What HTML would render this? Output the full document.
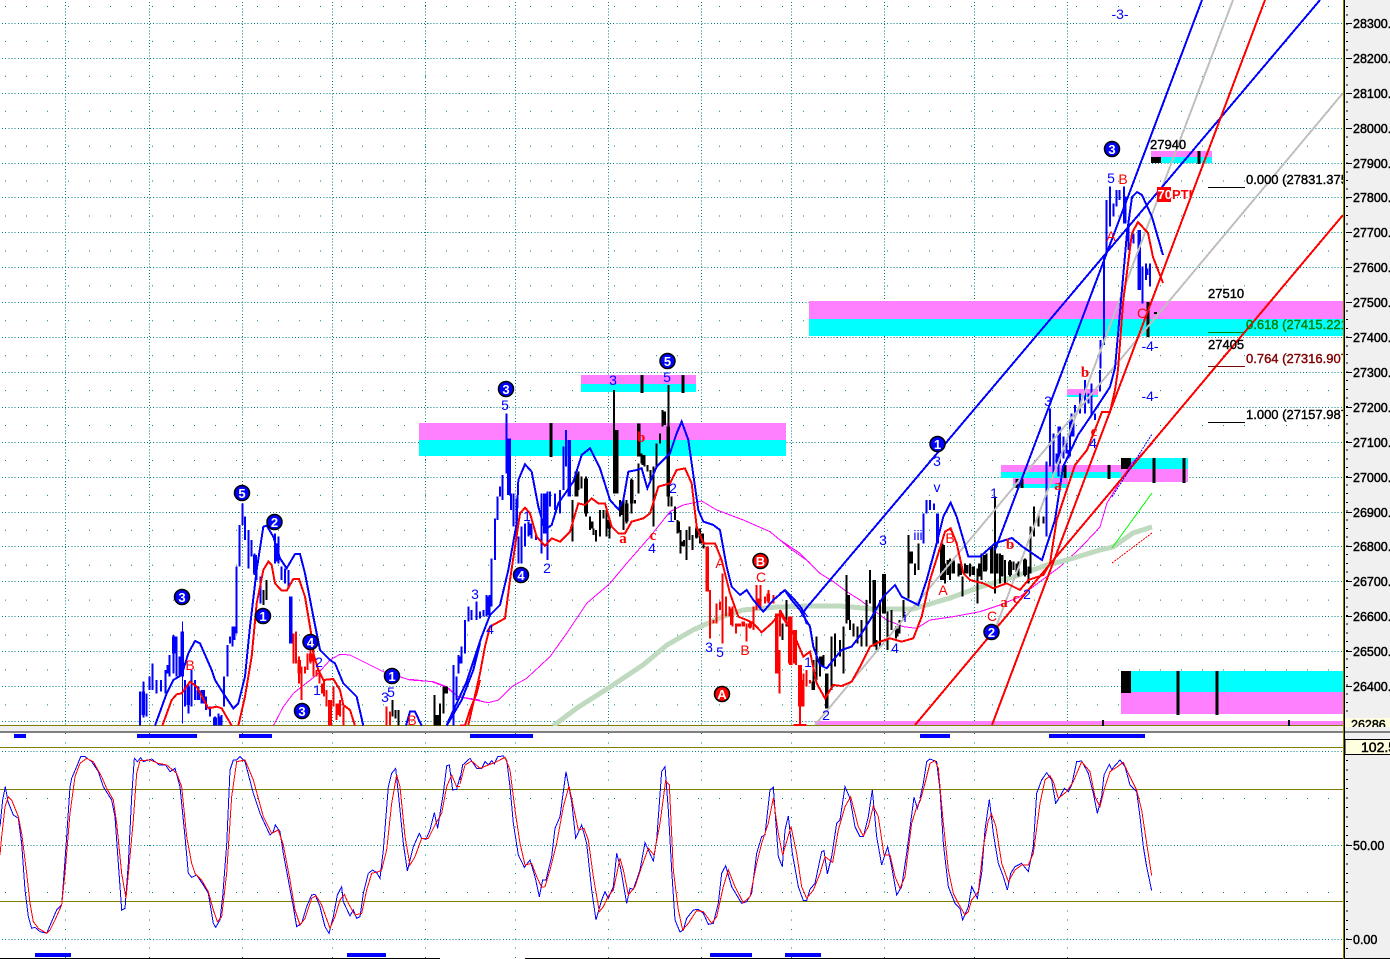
<!DOCTYPE html>
<html><head><meta charset="utf-8"><title>Chart</title>
<style>
html,body{margin:0;padding:0;background:#fff;width:1390px;height:959px;overflow:hidden}
svg{display:block;font-family:"Liberation Sans",Arial,sans-serif;shape-rendering:crispEdges}
.w{font-size:14px;text-anchor:middle;fill:#00f}
.r{font-size:14px;text-anchor:middle;fill:#f00}
.s{font-family:"Liberation Serif",serif;font-size:15px;font-weight:bold}
.k{font-size:13px;fill:#000;stroke:#000;stroke-width:.4}
.ax{font-size:12.5px;fill:#000;stroke:#000;stroke-width:.45}
.bt{font-size:13px;font-weight:bold;fill:#fff;text-anchor:middle}
.l{fill:none}
</style></head><body>
<svg width="1390" height="959" viewBox="0 0 1390 959" xmlns="http://www.w3.org/2000/svg">
<defs>
<pattern id="mi" x="0" y="0" width="21" height="34.92" patternUnits="userSpaceOnUse"><rect x="5" y="6" width="1" height="1" fill="#008080"/></pattern>
</defs>
<rect width="1390" height="959" fill="#fff"/>
<rect x="1345" y="0" width="45" height="959" fill="#f0f0f0"/>

<svg x="0" y="0" width="1344" height="726">
<rect width="1344" height="726" fill="url(#mi)"/>
<!-- major grid -->
<g stroke="#008080" stroke-width="1" stroke-dasharray="1 2.15" fill="none">
<path d="M2 23.5H1344M2 58.5H1344M2 93.5H1344M2 128.5H1344M2 163.5H1344M2 197.5H1344M2 232.5H1344M2 267.5H1344M2 302.5H1344M2 337.5H1344M2 372.5H1344M2 407.5H1344M2 442.5H1344M2 477.5H1344M2 512.5H1344M2 546.5H1344M2 581.5H1344M2 616.5H1344M2 651.5H1344M2 686.5H1344M2 721.5H1344"/>
<path d="M65.5 2V726M149.5 2V726M242.5 2V726M332.5 2V726M425.5 2V726M515.5 2V726M608.5 2V726M701.5 2V726M791.5 2V726M884.5 2V726M974.5 2V726M1067.5 2V726"/>
</g>
<!-- bands -->
<rect x="419" y="423" width="367" height="17" fill="#ff80ff"/><rect x="419" y="440" width="367" height="16" fill="#0ff"/>
<rect x="581" y="375" width="115" height="9" fill="#ff80ff"/><rect x="581" y="384" width="115" height="8" fill="#0ff"/>
<rect x="809" y="301" width="535" height="18" fill="#ff80ff"/><rect x="809" y="319" width="535" height="17" fill="#0ff"/>
<rect x="1151" y="151" width="61" height="6" fill="#ff80ff"/><rect x="1151" y="157" width="61" height="6" fill="#0ff"/><rect x="1151" y="157" width="10" height="6" fill="#000"/>
<rect x="1001" y="465" width="120" height="7" fill="#ff80ff"/><rect x="1001" y="472" width="120" height="6" fill="#0ff"/>
<rect x="1013" y="478" width="55" height="6" fill="#ff80ff"/><rect x="1013" y="484" width="55" height="4" fill="#0ff"/>
<rect x="1067" y="389" width="31" height="6" fill="#ff80ff"/><rect x="1067" y="395" width="31" height="2" fill="#0ff"/>
<rect x="1121" y="469" width="67" height="13" fill="#ff80ff"/><rect x="1131" y="458" width="57" height="11" fill="#0ff"/><rect x="1121" y="458" width="10" height="11" fill="#000"/>
<rect x="1121" y="692" width="223" height="22" fill="#ff80ff"/><rect x="1121" y="671" width="223" height="21" fill="#0ff"/><rect x="1121" y="671" width="10" height="22" fill="#000"/>
<rect x="815" y="721" width="529" height="4" fill="#ff80ff"/>
<path d="M0 725.5H1344" stroke="#808000" stroke-width="1"/>
<!-- black ticks -->
<path stroke="#000" stroke-width="3" fill="none" d="M551 423V457M642 375V393M683 375V393M1154 458V483M1184 458V483M1109 465V479M1065 465V478M1017 479V488M1022 479V488M1178 671V715M1217 671V715M1199 151V164M1148 302V337"/>
<path stroke="#000" stroke-width="2" d="M1103 720V726M1289 720V726M1154 313H1157"/>

<!-- magenta MA -->
<g fill="none" stroke="#f0f" stroke-width="3">
<polyline transform="translate(0,480) scale(.33333)" points="820,737 850,680 880,640 950,585 990,540 1020,523 1050,525 1150,575 1230,600 1300,605 1340,620 1375,650 1440,660"/>
<polyline transform="translate(410,340) scale(.33333)" points="0,1018 65,1025 105,1040 145,1070 235,1088 265,1080 305,1040 350,1015 420,950 470,880 530,790 600,730 650,670 720,590 780,515 820,495 875,483 920,510 1000,540 1080,575 1140,625 1200,668"/>
<polyline transform="translate(780,420) scale(.33333)" points="0,360 60,400 120,460 160,485 200,515 240,540 280,570 320,600 370,620 410,625 450,600 520,590 600,575 660,555 720,530 800,470 840,440 900,385 960,321 981,249 1029,171 1056,129 1119,69"/>
</g>
<!-- green MA -->
<g fill="none" stroke="#bfdabf" stroke-width="5"><polyline points="553,726 577,708 610,687 643,665 667,645 693,630 722,617 743,610 777,607 810,606 840,606 873,609 913,609 950,598 980,587 1013,577 1047,565 1067,560 1100,550 1113,547 1133,533 1152,527"/></g>

<!-- candles: blue -->
<g fill="none" stroke="#00f" stroke-width="1.6">
<path transform="translate(0,480) scale(.33333)" stroke-width="6" d="M420 635V737M430 605V712M440 640V710M448 590V630M457 550V630M470 600V640M483 600V635M497 570V640M508 525V590M520 465V580M530 470V590M538 530V590M555 600V680M565 610V700M575 570V680M585 600V660M595 620V660M605 630V670M618 650V690M630 680V710M645 710V737M655 700V737M665 705V737M672 590V680M682 495V590M690 470V490M697 440V500M703 440V480M710 260V460M718 135V260M727 70V135M735 110V180M745 150V265M755 180V230M763 220V285M770 250V300M782 290V370M825 160V250M835 170V250M845 260V300M855 265V310M865 270V325M1360 555V737M1370 590V660M1385 500V550M1395 420V520M1405 380V415M1415 395V420M1430 395V410"/>
<path transform="translate(0,480) scale(.33333)" stroke-width="11" d="M430 635V705M547 455V590M872 350V490M522 470V520M505 555V580M565 620V675M595 630V660M610 630V670M645 712V737M662 710V737M765 225V280M830 190V245"/>
<path transform="translate(0,480) scale(.33333)" stroke-width="3" d="M547 425V730"/>
<path transform="translate(410,340) scale(.33333)" stroke-width="6" d="M130 975V1155M145 945V1000M155 945V970M165 840V940M175 800V845M185 810V830M200 785V840M210 815V835M220 810V830M230 765V830M238 765V830M245 655V800M255 535V660M262 470V540M270 440V470M278 405V480M290 220V400M303 460V510M310 460V560M320 475V590M325 590V670M335 560V670M345 550V620M355 545V590M365 560V595M378 580V600M395 460V640M412 455V660M420 455V500M435 460V510M450 450V520M460 320V450M468 270V380"/>
<path transform="translate(410,340) scale(.33333)" stroke-width="11" d="M297 295V465M405 460V580M478 300V470M235 770V825M150 950V970M360 550V585"/>
<path transform="translate(780,420) scale(.33333)" stroke-width="6" d="M430 280V370M440 240V280M450 240V270M462 250V270M800 125V350M810 100V130M820 40V120M830 100V130M840 20V130M850 60V100M860 60V100M870 0V110M880 0V50"/>
<path transform="translate(780,420) scale(.33333)" stroke-width="9" d="M473 280V370"/>
<path transform="translate(1000,370) scale(.33333)" stroke-width="6" d="M140 275V490M150 115V290M160 255V310M175 170V320M190 200V265M205 240V265M215 130V200M225 105V140M240 70V130M255 30V130M265 70V100M275 40V135M285 130V150M300 0V65"/>
<path transform="translate(1000,0) scale(.33333)" stroke-width="6" d="M302 1020V1105M312 770V1035M320 600V760M330 560V680M340 610V650M350 570V620M358 570V600M372 560V670M385 660V750M400 700V730M428 800V910M438 790V840M450 790V860"/>
<path transform="translate(1000,0) scale(.33333)" stroke-width="11" d="M418 690V870M374 590V670M440 805V825"/>
</g>
<!-- candles: red -->
<g fill="none" stroke="#f00" stroke-width="1.6">
<path transform="translate(0,480) scale(.33333)" stroke-width="6" d="M880 460V550M888 455V550M897 530V610M905 560V660M915 560V580M922 520V570M932 510V550M940 510V590M950 570V590M958 570V610M966 610V640M972 600V650M980 630V680M1000 620V680M1010 670V720M1020 660V710M1030 680V737M1160 680V737M1170 695V737"/>
<path transform="translate(0,480) scale(.33333)" stroke-width="11" d="M990 660V737M932 520V545M898 540V580M1015 670V705"/>
<path transform="translate(410,340) scale(.33333)" stroke-width="6" d="M900 750V895M910 840V850M920 790V850M930 785V810M938 700V910M948 770V830M958 800V830M968 800V860M978 850V880M990 850V860M1010 850V905M1020 845V865M1030 800V870M1040 735V810M1052 735V810M1065 770V790M1075 750V790M1090 765V790M1108 930V1060M1158 940V975M1180 1000V1055M1190 990V1040M1170 1100V1150"/>
<path transform="translate(410,340) scale(.33333)" stroke-width="11" d="M892 620V755M1100 820V1000M1142 830V975M1170 975V1100M1150 1157H1190M965 805V855M985 850V860M1000 845V860M1020 850V862M1045 775V800M1075 760V785"/>
<path transform="translate(780,420) scale(.33333)" stroke-width="6" d="M0 570V650M60 780V915M70 790V860M90 780V790"/>
<path transform="translate(780,420) scale(.33333)" stroke-width="11" d="M30 590V730M45 630V730M65 780V860"/>
</g>
<!-- candles: black -->
<g fill="none" stroke="#000" stroke-width="1.6">
<path transform="translate(0,480) scale(.33333)" stroke-width="6" d="M790 330V375M800 300V360M1178 660V710M1186 690V715M1196 690V737M1303 645V737M1320 670V737M1330 620V700"/>
<path transform="translate(0,480) scale(.33333)" stroke-width="11" d="M1312 705V737M1338 620V640"/>
<path transform="translate(410,340) scale(.33333)" stroke-width="6" d="M488 480V605M497 395V470M505 395V450M515 410V445M528 410V530M540 530V570M550 565V585M558 570V605M570 510V590M580 510V535M590 510V590M598 540V595M612 150V460M630 480V530M640 480V570M650 480V550M665 415V520M675 480V490M686 370V460M695 340V370M703 345V380M712 375V395M722 390V420M730 380V560M740 310V380M750 280V310M758 210V260M765 215V255M775 135V500M785 470V500M795 500V540M803 540V580M812 570V640M822 600V620M830 570V660M838 560V600M848 585V630M860 560V595M870 565V610M880 605V625M1118 850V900M1130 780V860"/>
<path transform="translate(410,340) scale(.33333)" stroke-width="11" d="M620 270V460M650 490V545M686 250V350M775 260V470M763 215V255M500 400V470M528 415V520M545 545V565M598 540V565M635 485V525M665 420V490M700 345V375M805 545V578M820 605V618M860 565V592M876 580V610"/>
<path transform="translate(780,420) scale(.33333)" stroke-width="6" d="M100 720V810M110 650V780M120 710V770M130 705V740M155 650V810M165 640V740M180 660V710M190 620V760M200 465V610M210 600V630M220 610V650M232 620V670M245 600V680M260 540V680M270 450V550M290 660V690M300 540V680M322 575V690M335 570V630M348 620V655M358 600V640M370 540V600M385 345V535M393 395V430M405 430V465M415 370V450M495 430V490M510 415V480M520 420V460M535 430V470M548 470V530M555 430V460M570 430V470M580 440V460M592 445V550M605 400V480M620 400V450M645 230V520M660 400V490M675 420V490M690 420V470M700 425V450M715 425V470M735 415V470M745 440V490M752 320V460M762 260V350M775 280V320M790 290V310"/>
<path transform="translate(780,420) scale(.33333)" stroke-width="11" d="M140 760V865M283 480V680M312 462V580M205 525V600M485 370V480M393 395V430M635 380V460M350 625V650M100 785V810M125 710V740M490 375V480M505 420V465M520 425V460M540 430V465M560 435V460M580 440V465M600 430V470M615 405V455M650 400V460M665 405V470M690 425V465M712 430V465M735 418V465"/>
</g>

<!-- trend lines -->
<g fill="none" stroke-width="2">
<path stroke="#bfbfbf" d="M993 635L1233 0M815 725L1343 93"/>
<path stroke="#00f" d="M803 612L1320 0M995 550L1202 0"/>
<path stroke="#f00" d="M992 725L1265 0M915 725L1343 215"/>
</g>
<!-- MA blue -->
<g fill="none" stroke="#00f" stroke-width="6">
<polyline transform="translate(0,480) scale(.33333)" points="465,737 500,640 520,600 545,585 565,520 585,483 600,490 635,570 645,600 670,640 680,655 700,685 715,670 735,590 750,440 770,270 790,140 800,137 820,170 840,235 860,265 885,222 900,222 915,280 940,410 960,510 990,540 1005,550 1030,610 1070,650 1090,737"/>
<polyline transform="translate(0,480) scale(.33333)" points="1218,737 1230,695 1245,695 1265,737"/>
<polyline transform="translate(0,480) scale(.33333)" points="1340,737 1385,660 1420,570 1440,490"/>
<polyline transform="translate(410,340) scale(.33333)" points="110,1155 170,1025 215,890 240,825 270,795 295,690 320,550 325,420 345,373 365,395 385,500 405,570 425,555 445,490 490,425 515,345 540,325 570,385 600,480 625,508 640,480 655,395 680,390 695,385 712,445 740,380 780,340 800,280 815,245 835,300 865,510 880,545 910,555 930,570 950,680 965,740 990,765 1010,750 1030,780 1060,815 1090,780 1125,750 1150,775 1175,805 1190,850 1200,855"/>
<polyline transform="translate(780,420) scale(.33333)" points="0,520 15,512 35,540 60,570 90,620 100,680 120,735 140,745 160,720 185,690 215,680 245,640 270,600 310,530 345,495 365,530 385,540 415,555 440,480 470,370 490,290 512,248 530,290 565,410 600,410 645,370 696,354 729,381 786,420 825,300 849,141 894,45 939,-21 990,-99 1005,-156 1041,-561 1056,-669 1071,-684 1086,-675 1116,-609 1149,-495"/>
</g>
<!-- MA red -->
<g fill="none" stroke="#f00" stroke-width="6">
<polyline transform="translate(0,480) scale(.33333)" points="487,737 515,660 530,643 545,640 570,605 590,620 625,685 650,680 665,685 695,737"/>
<polyline transform="translate(0,480) scale(.33333)" points="715,737 735,650 755,530 770,370 790,270 805,245 815,255 825,310 845,332 860,332 880,297 897,297 915,350 935,470 940,520 955,570 970,600 1000,597 1020,630 1030,675 1050,690 1065,737"/>
<polyline transform="translate(0,480) scale(.33333)" points="1380,737 1395,737 1410,690 1430,640 1440,600"/>
<polyline transform="translate(410,340) scale(.33333)" points="175,1155 210,1000 225,920 240,860 285,835 300,720 315,620 330,520 345,503 360,520 380,590 405,618 425,595 450,605 480,575 505,490 525,495 545,475 565,490 585,490 605,560 625,580 645,580 665,545 700,535 720,520 745,440 780,430 800,390 825,385 845,430 860,560 880,610 915,610 935,660 960,760 985,830 1010,840 1030,850 1055,877 1085,850 1110,820 1150,880 1180,950 1200,935"/>
<polyline transform="translate(780,420) scale(.33333)" points="0,570 40,640 70,710 90,695 110,790 135,835 160,795 185,798 215,785 240,740 270,680 300,665 330,655 365,665 400,655 425,590 450,480 475,400 495,335 512,325 530,370 550,460 570,480 610,490 640,505 680,490 720,510 745,480 790,465 810,430 830,300 850,240 885,135 921,90 966,-24 990,-24 1005,-90 1014,-150 1029,-351 1056,-561 1074,-594 1104,-561 1119,-489 1149,-411"/>
</g>
<!-- small fan -->
<path d="M1112 497L1152 434" stroke="#00f" stroke-width="1" stroke-dasharray="2 1" fill="none"/>
<path d="M1112 548L1152 493" stroke="#0f0" stroke-width="1" fill="none"/>
<path d="M1112 563L1152 533" stroke="#f00" stroke-width="1" stroke-dasharray="2 1" fill="none"/>

<!-- fib labels -->
<g fill="none" stroke-width="1"><path stroke="#000" d="M1208 187.5H1245M1208 422.5H1245"/><path stroke="#080" d="M1208 332.5H1245"/><path stroke="#800000" d="M1208 366.5H1245"/></g>
<text class="k" x="1150" y="149">27940</text>
<text class="k" x="1246" y="184">0.000 (27831.375)</text>
<text class="k" x="1208" y="298">27510</text>
<text class="k" x="1246" y="329" style="fill:#008000;stroke:#008000">0.618 (27415.221)</text>
<text class="k" x="1208" y="349">27405</text>
<text class="k" x="1246" y="363" style="fill:#800000;stroke:#800000">0.764 (27316.907)</text>
<text class="k" x="1246" y="419">1.000 (27157.987)</text>
<rect x="1157" y="187" width="14" height="15" fill="#f00"/>
<text x="1157.5" y="199" style="font-size:13px;font-weight:bold;fill:#fff">70</text>
<text x="1172" y="199" style="font-size:13px;fill:#f00;font-weight:bold">PTI</text>

<!-- wave labels -->
<text class="w" x="1120" y="19">-3-</text><text class="w" x="1150" y="351">-4-</text><text class="w" x="1150" y="401">-4-</text>
<text class="w" x="1111" y="183">5</text><text class="r" x="1123" y="184">B</text><text class="r" x="1111" y="241">A</text><text class="r" x="1142" y="318">C</text>
<text class="r" x="190" y="670">B</text><text class="w" x="319" y="667">2</text><text class="w" x="317" y="695">1</text><text class="w" x="385" y="702">3</text><text class="w" x="391" y="697">5</text><text class="r" x="412" y="725">B</text>
<text class="w" x="505" y="410">5</text><text class="w" x="475" y="599">3</text><text class="w" x="490" y="634">4</text><text class="w" x="547" y="573">2</text><text class="w" x="527" y="521">1</text>
<text class="r s" x="623" y="543">a</text><text class="w" x="613" y="385">3</text><text class="w" x="667" y="382">5</text><text class="r s" x="641" y="442">b</text><text class="w" x="673" y="493">2</text><text class="w" x="671" y="522">1</text><text class="r s" x="653" y="540">c</text><text class="w" x="652" y="553">4</text>
<text class="r" x="720" y="568">A</text><text class="r" x="761" y="582">C</text><text class="w" x="709" y="652">3</text><text class="w" x="720" y="657">5</text><text class="r" x="745" y="655">B</text>
<text class="w" x="808" y="667">1</text><text class="w" x="804" y="617">X</text><text class="w" x="826" y="720">2</text><text class="w" x="883" y="545">3</text><text class="w" x="895" y="653">4</text><text class="w" x="918" y="540">iii</text><text class="w" x="905" y="622">i</text><text class="w" x="937" y="492">v</text><text class="w" x="937" y="466">3</text><text class="w" x="994" y="498">1</text>
<text class="r" x="950" y="543">B</text><text class="r" x="943" y="595">A</text><text class="r s" x="1010" y="549">b</text><text class="r" x="992" y="621">C</text><text class="r s" x="1004" y="607">a</text><text class="r s" x="1016" y="603">c</text><text class="w" x="1027" y="599">2</text><text class="r s" x="1058" y="490">a</text>
<text class="w" x="1048" y="406">3</text><text class="r s" x="1085" y="377">b</text><text class="w" x="1093" y="448">4</text><text class="r s" x="1094" y="436">c</text>

<!-- badges -->
<g stroke="#000" stroke-width="1.5" fill="#00f" style="shape-rendering:geometricPrecision">
<circle cx="242" cy="493" r="7.5"/><circle cx="274.5" cy="522" r="7.5"/><circle cx="182" cy="597" r="7.5"/><circle cx="263" cy="616" r="7.5"/><circle cx="310.5" cy="642" r="7.5"/><circle cx="302" cy="711" r="7.5"/><circle cx="392" cy="676" r="7.5"/><circle cx="506" cy="389" r="7.5"/><circle cx="521" cy="575" r="7.5"/><circle cx="667.5" cy="361" r="7.5"/><circle cx="937.5" cy="444" r="7.5"/><circle cx="991.5" cy="632" r="7.5"/><circle cx="1112" cy="149" r="7.5"/>
<circle cx="760.5" cy="561" r="7.5" fill="#f00"/><circle cx="722" cy="694" r="7.5" fill="#f00"/>
</g>
<text class="bt" x="242" y="498">5</text><text class="bt" x="274.5" y="527">2</text><text class="bt" x="182" y="602">3</text><text class="bt" x="263" y="621">1</text><text class="bt" x="310.5" y="647">4</text><text class="bt" x="302" y="716">3</text><text class="bt" x="392" y="681">1</text><text class="bt" x="506" y="394">3</text><text class="bt" x="521" y="580">4</text><text class="bt" x="667.5" y="366">5</text><text class="bt" x="937.5" y="449">1</text><text class="bt" x="991.5" y="637">2</text><text class="bt" x="1112" y="154">3</text><text class="bt" x="760.5" y="566">B</text><text class="bt" x="722" y="699">A</text>
</svg>

<!-- separator -->
<rect x="0" y="726" width="1390" height="5" fill="#f0f0f0"/>
<rect x="0" y="731" width="1390" height="2" fill="#808080"/>

<!-- lower pane -->
<g stroke="#008080" fill="none" stroke-width="1">
<path stroke-dasharray="1 2.15" d="M2 751.5H1344M2 845.5H1344M2 939.5H1344"/>
<path stroke-dasharray="1 8.33" d="M65.5 733V958M149.5 733V958M242.5 733V958M332.5 733V958M425.5 733V958M515.5 733V958M608.5 733V958M701.5 733V958M791.5 733V958M884.5 733V958M974.5 733V958M1067.5 733V958"/>
<path stroke-dasharray="1 20" d="M5 798.5H1344M5 892.5H1344"/>
</g>
<path d="M0 747.5H1344M0 789.5H1344M0 901.5H1344" stroke="#808000" stroke-width="1"/>
<path d="M0 958.5H440M525 958.5H1390" stroke="#000" stroke-width="1"/>
<g fill="#00f">
<rect x="14" y="734" width="12" height="4"/><rect x="137" y="734" width="60" height="4"/><rect x="239" y="734" width="33" height="4"/><rect x="470" y="734" width="63" height="4"/><rect x="920" y="734" width="30" height="4"/><rect x="1049" y="734" width="96" height="4"/>
<rect x="35" y="953" width="36" height="4"/><rect x="347" y="953" width="39" height="4"/><rect x="710" y="953" width="42" height="4"/><rect x="785" y="953" width="36" height="4"/>
</g>

<!-- stochastic blue -->
<g fill="none" stroke="#00f" stroke-width="3">
<polyline transform="translate(0,730) scale(.33333)" points="0,290 8,210 16,170 24,215 40,255 55,265 65,340 75,480 85,560 95,595 105,592 120,605 140,610 155,575 170,540 185,525 190,460 200,320 210,170 215,145 230,110 242,80 255,80 275,95 295,125 310,170 335,210 345,260 355,400 365,540 375,535 385,400 395,200 403,85 412,95 422,83 430,95 455,87 478,105 497,105 510,125 525,115 540,170 555,320 565,430 575,442 590,435 610,465 625,490 640,580 647,592 660,570 668,500 680,345 690,120 700,90 710,90 720,80 735,95 760,190 780,250 810,315 820,305 826,285 840,305 850,370 865,450 880,530 890,590 905,580 920,530 935,495 945,493 960,530 975,590 987,610 1000,560 1012,495 1025,470 1030,515 1050,558 1060,540 1070,565 1080,560 1090,490 1105,430 1118,420 1130,428 1140,445 1150,360 1165,170 1175,130 1187,115 1195,190 1210,340 1222,423 1240,350 1258,310 1265,325 1278,328 1290,300 1303,248 1313,295 1330,190 1340,108 1348,105 1358,180 1370,178 1380,140"/>
<polyline transform="translate(460,730) scale(.33333)" points="0,150 8,105 30,85 50,115 65,115 75,95 85,105 95,92 103,102 113,80 130,78 140,90 150,170 160,280 175,375 193,412 210,390 225,440 238,500 248,450 258,450 275,380 285,295 300,260 318,125 335,215 347,325 365,285 380,340 395,480 408,570 425,510 435,485 445,505 460,470 470,370 482,415 500,520 510,475 520,478 540,420 555,338 565,360 580,393 590,330 605,125 615,110 625,240 635,420 645,570 660,606 670,600 680,565 700,540 715,538 730,550 745,583 760,580 775,520 785,430 797,407 815,470 845,520 860,515 875,490 890,370 905,320 915,315 930,180 940,172 955,380 967,410 975,300 985,258 997,370 1015,470 1030,512 1040,512 1050,478 1065,460 1085,365 1092,362 1102,432 1115,380 1130,280 1140,270 1155,170 1170,205 1185,290 1200,320 1210,320 1225,260 1237,180 1250,320 1265,405 1283,350 1295,410 1310,495 1325,470 1340,370 1362,202 1372,235 1380,210"/>
<polyline transform="translate(920,730) scale(.33333)" points="0,205 10,160 20,95 30,87 50,95 60,180 70,340 85,470 105,520 120,535 128,570 145,530 155,470 165,490 172,505 185,430 195,300 208,208 220,310 235,400 250,440 262,480 272,430 285,410 305,400 325,425 340,350 350,190 365,150 380,128 395,150 407,220 420,200 433,175 445,185 455,165 470,95 485,93 505,130 520,190 532,250 545,200 552,135 568,103 575,118 600,90 615,110 630,165 650,185 660,260 670,350 680,410 695,482"/>
</g>
<!-- stochastic red -->
<g fill="none" stroke="#f00" stroke-width="3">
<polyline transform="translate(0,730) scale(.33333)" points="0,375 5,320 15,230 25,200 35,210 55,260 65,310 80,430 90,520 100,575 115,595 140,610 150,600 165,570 185,525 195,430 210,250 225,140 240,100 260,85 280,95 305,140 320,175 340,210 350,280 365,430 378,505 388,400 400,270 410,130 420,92 450,90 475,100 500,105 530,130 545,170 560,320 575,400 585,430 605,450 625,485 640,540 652,575 665,560 680,430 695,200 710,95 735,90 760,150 790,260 815,310 835,300 850,345 870,450 885,540 900,585 915,565 935,505 948,497 965,525 990,595 1005,560 1020,510 1033,493 1045,520 1065,555 1085,550 1100,480 1115,430 1135,425 1145,420 1160,360 1175,220 1190,135 1200,170 1215,320 1230,405 1245,380 1265,325 1285,325 1305,285 1325,250 1340,170 1355,135 1370,170 1380,170"/>
<polyline transform="translate(460,730) scale(.33333)" points="0,162 15,105 35,93 60,115 85,105 110,95 135,82 150,120 165,240 180,340 195,405 215,400 230,440 245,472 255,470 270,420 290,340 310,230 327,168 340,230 355,300 372,295 385,330 400,440 418,545 430,530 445,498 460,480 480,385 490,420 505,495 525,470 545,410 565,355 582,375 600,280 617,152 628,165 640,420 655,540 668,600 685,580 710,542 730,545 755,580 770,560 790,470 805,420 825,470 850,518 870,500 890,400 905,340 925,280 940,205 955,310 968,375 993,290 1010,370 1025,470 1040,505 1060,480 1080,430 1095,380 1118,397 1135,300 1155,230 1172,200 1195,290 1210,318 1225,290 1240,228 1255,260 1272,375 1290,375 1305,440 1320,475 1335,440 1355,280 1370,232 1380,215"/>
<polyline transform="translate(920,730) scale(.33333)" points="0,215 15,160 30,100 45,92 55,115 70,280 85,420 100,490 115,520 135,555 145,545 155,510 175,485 190,350 205,270 215,253 228,290 245,400 265,455 285,420 305,405 325,405 340,370 360,220 375,150 390,137 400,155 415,205 440,185 460,155 485,95 510,125 525,200 540,230 555,170 570,125 595,108 610,97 625,130 650,180 665,240 680,340 695,437"/>
</g>

<!-- axis -->
<path d="M1343.5 0V959" stroke="#808000" stroke-width="1"/>
<path d="M1344.5 0V959" stroke="#000" stroke-width="1"/>
<g stroke="#000" stroke-width="1" fill="none">
<path d="M1346 23.5H1352M1346 58.5H1352M1346 93.5H1352M1346 128.5H1352M1346 163.5H1352M1346 197.5H1352M1346 232.5H1352M1346 267.5H1352M1346 302.5H1352M1346 337.5H1352M1346 372.5H1352M1346 407.5H1352M1346 442.5H1352M1346 477.5H1352M1346 512.5H1352M1346 546.5H1352M1346 581.5H1352M1346 616.5H1352M1346 651.5H1352M1346 686.5H1352M1346 845.5H1352M1346 939.5H1352"/>
<path stroke-width="2" stroke-dasharray="1 7.7" d="M1347 6V716"/>
<path stroke-width="2" stroke-dasharray="1 8.4" d="M1347 760V955"/>
</g>
<g class="ax">
<text x="1353" y="28">28300.0</text><text x="1353" y="63">28200.0</text><text x="1353" y="98">28100.0</text><text x="1353" y="133">28000.0</text><text x="1353" y="168">27900.0</text><text x="1353" y="202">27800.0</text><text x="1353" y="237">27700.0</text><text x="1353" y="272">27600.0</text><text x="1353" y="307">27500.0</text><text x="1353" y="342">27400.0</text><text x="1353" y="377">27300.0</text><text x="1353" y="412">27200.0</text><text x="1353" y="447">27100.0</text><text x="1353" y="482">27000.0</text><text x="1353" y="517">26900.0</text><text x="1353" y="551">26800.0</text><text x="1353" y="586">26700.0</text><text x="1353" y="621">26600.0</text><text x="1353" y="656">26500.0</text><text x="1353" y="691">26400.0</text>
<text x="1353" y="850">50.00</text><text x="1353" y="944">0.00</text>
</g>
<rect x="1345" y="718" width="45" height="9" fill="#ffffe0"/>
<svg x="1345" y="716" width="45" height="11"><text class="ax" x="6" y="13">26286</text></svg>
<rect x="1345" y="739.5" width="46" height="15" fill="#ffffe0" stroke="#000" stroke-width="1"/>
<text x="1361" y="752" style="font-size:14px;fill:#000;stroke:#000;stroke-width:.5">102.5</text>
</svg>
</body></html>
